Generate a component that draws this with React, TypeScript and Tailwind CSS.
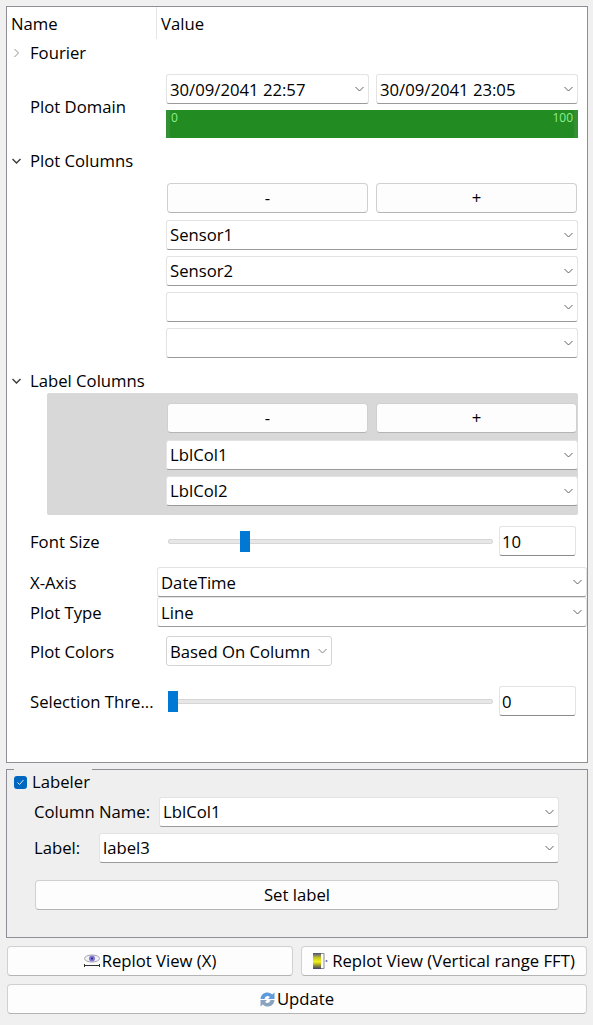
import type { ReactNode } from "react";

// Qt property-browser side panel, fixed at the window's 593x1025

function Chevron({ className = "", dir = "down" }: { className?: string; dir?: "down" | "right" }) {
    return (
        <svg width="9" height="6" viewBox="0 0 9 6" className={`shrink-0 ${dir === "right" ? "-rotate-90" : ""} ${className}`}>
            <path d="M0.5 1 L4.5 5 L8.5 1" fill="none" stroke="currentColor" strokeWidth="1" />
        </svg>
    );
}

function Combo({ text, className = "" }: { text?: string; className?: string }) {
    return (
        <div className={`flex h-[30px] items-center justify-between rounded-[3px] border border-[#e3e3e3] border-b-[#9a9a9a] bg-white pl-[3px] pr-[4px] ${className}`}>
            <span>{text}</span>
            <Chevron className="text-[#606060]" />
        </div>
    );
}

function Btn({ children, className = "" }: { children: ReactNode; className?: string }) {
    return (
        <div className={`flex h-[30px] items-center justify-center rounded-[4px] border border-[#d0d0d0] border-b-[#b4b4b4] bg-[#fdfdfd] ${className}`}>
            {children}
        </div>
    );
}

function Slider({ pos }: { pos: number }) {
    return (
        <div className="relative h-[5px] w-[325px] rounded-[2px] border border-[#d6d6d6] bg-[#e7e7e7]">
            <div className="absolute top-[-9px] h-[21px] w-[10px] bg-[#0078d4]" style={{ left: pos }} />
        </div>
    );
}

function SliderRow({ label, value, pos, className = "" }: { label: string; value: string; pos: number; className?: string }) {
    return (
        <div className={`flex h-[30px] items-center ${className}`}>
            <span className="w-[161px] translate-y-px pl-[23px]">{label}</span>
            <Slider pos={pos} />
            <div className="ml-[6px] flex h-[30px] w-[77px] items-center rounded-[3px] border border-[#e3e3e3] border-b-[#8a8a8a] bg-white pl-[2px]">
                <span className="translate-y-px">{value}</span>
            </div>
        </div>
    );
}

function Section({ label, className = "" }: { label: string; className?: string }) {
    return (
        <div className={`flex h-[20px] items-center pl-[5px] ${className}`}>
            <svg width="9" height="6" viewBox="0 0 9 6" className="shrink-0 text-[#404040]">
                <path d="M0.5 1 L4.5 5 L8.5 1" fill="none" stroke="currentColor" strokeWidth="1.5" />
            </svg>
            <span className="ml-[9px]">{label}</span>
        </div>
    );
}

function PlusMinus() {
    return (
        <div className="flex gap-[8px] px-[1px]">
            <Btn className="w-[201px]">-</Btn>
            <Btn className="w-[201px]">+</Btn>
        </div>
    );
}

function EyeIcon() {
    return (
        <svg width="16" height="16" viewBox="0 0 16 16" className="shrink-0">
            <ellipse cx="8" cy="5.5" rx="7.5" ry="3.5" fill="#f2f2f6" stroke="#a5a5ad" />
            <circle cx="8" cy="5.5" r="3" fill="#7f78d8" />
            <circle cx="8" cy="5.5" r="1" fill="#20204a" />
            <path d="M0 12.5 H16 M0.5 11 V14 M15.5 11 V14" stroke="#303030" fill="none" />
        </svg>
    );
}

function FftIcon() {
    return (
        <svg width="15" height="16" viewBox="0 0 15 16" className="shrink-0">
            <defs>
                <linearGradient id="fftBar" x1="0" y1="0" x2="0" y2="1">
                    <stop offset="0" stopColor="#4a4a8a" />
                    <stop offset="0.3" stopColor="#c8c820" />
                    <stop offset="0.55" stopColor="#f2f21a" />
                    <stop offset="0.8" stopColor="#8a8a30" />
                    <stop offset="1" stopColor="#3a3a7a" />
                </linearGradient>
            </defs>
            <rect x="0" y="0" width="8" height="16" fill="url(#fftBar)" />
            <path d="M8 0.5 H11 V15.5 H8" fill="none" stroke="#8a8a8a" />
            <circle cx="13.5" cy="8" r="1" fill="#6a6ab8" />
        </svg>
    );
}

function RefreshIcon() {
    return (
        <svg width="15" height="15" viewBox="0 0 15 15" className="shrink-0">
            <path d="M0.5 7 C1 2.5 4 0.5 7.5 0.5 C9.5 0.5 11 1.5 12.2 2.6 L14.5 0.5 V7 H8 L10 5 C8 3.4 5.5 3.6 4.5 7 Z" fill="#5f9bdc" />
            <path d="M14.5 8 C14 12.5 11 14.5 7.5 14.5 C5.5 14.5 4 13.5 2.8 12.4 L0.5 14.5 V8 H7 L5 10 C7 11.6 9.5 11.4 10.5 8 Z" fill="#8aa4c0" />
        </svg>
    );
}

export default function App() {
    return (
        <div className="h-[1025px] w-[593px] overflow-hidden bg-[#f0f0f0] pl-[6px] pr-[5px] pt-[6px] text-[16.7px] leading-[22px] text-black [font-family:'Open_Sans',sans-serif]">
            {/* property tree */}
            <div className="h-[757px] border border-[#8e8e94] bg-white">
                <div className="flex h-[32px] items-center">
                    <span className="w-[149px] translate-y-px pl-[4px]">Name</span>
                    <div className="flex h-full items-center border-l border-[#e5e5e5] pl-[4px]">
                        <span className="translate-y-px">Value</span>
                    </div>
                </div>

                <div className="mt-[4px] flex h-[20px] items-center pl-[5px]">
                    <Chevron dir="right" className="text-[#909090]" />
                    <span className="ml-[9px]">Fourier</span>
                </div>

                <div className="mt-[11px] flex">
                    <span className="w-[159px] translate-y-px self-center pl-[23px]">Plot Domain</span>
                    <div className="w-[412px]">
                        <div className="flex gap-[7px] [&_span]:translate-y-px">
                            <Combo text="30/09/2041 22:57" className="w-[203px]" />
                            <Combo text="30/09/2041 23:05" className="w-[202px]" />
                        </div>
                        <div className="mt-[6px] flex h-[28px] justify-between border-x-4 border-[#338f33] bg-[#228b22] px-[1px] text-[12px] leading-[16px] text-[#8cf08c]">
                            <span>0</span>
                            <span>100</span>
                        </div>
                    </div>
                </div>

                <Section label="Plot Columns" className="mt-[13px]" />

                <div className="ml-[159px] mt-[12px] flex w-[412px] flex-col">
                    <PlusMinus />
                    <div className="mt-[7px] flex flex-col gap-[6px]">
                        <Combo text="Sensor1" />
                        <Combo text="Sensor2" />
                        <Combo />
                        <Combo />
                    </div>
                </div>

                <Section label="Label Columns" className="mt-[13px]" />

                <div className="ml-[40px] mt-[2px] flex h-[122px] w-[531px] flex-col rounded-[2px] bg-[#d8d8d8] pl-[119px] pt-[10px]">
                    <PlusMinus />
                    <div className="mt-[7px] flex flex-col gap-[6px]">
                        <Combo text="LblCol1" />
                        <Combo text="LblCol2" />
                    </div>
                </div>

                <SliderRow label="Font Size" value="10" pos={71} className="mt-[11px]" />

                <div className="mt-[11px] flex [&_span]:translate-y-px">
                    <span className="w-[150px] self-center pl-[23px]">X-Axis</span>
                    <Combo text="DateTime" className="w-[430px]" />
                </div>
                <div className="flex [&_span]:translate-y-px">
                    <span className="w-[150px] self-center pl-[23px]">Plot Type</span>
                    <Combo text="Line" className="w-[430px]" />
                </div>

                <div className="mt-[9px] flex [&_span]:translate-y-px">
                    <span className="w-[159px] self-center pl-[23px]">Plot Colors</span>
                    <div className="flex h-[30px] w-[166px] items-center justify-between rounded-[3px] border border-[#d4d4d4] bg-white pl-[3px] pr-[4px]">
                        <span>Based On Column</span>
                        <Chevron className="text-[#808080]" />
                    </div>
                </div>

                <SliderRow label="Selection Thre..." value="0" pos={-1} className="mt-[20px]" />
            </div>

            {/* labeler group */}
            <div className="relative mt-[6px] h-[169px] border border-[#8e8e94] bg-[#efefef]">
                <div className="absolute left-[7px] top-[-1px] flex h-[24px] w-[78px] items-center bg-[#efefef] pt-[2px]">
                    <div className="flex h-[13px] w-[13px] items-center justify-center rounded-[3px] bg-[#0067c0]">
                        <svg width="9" height="9" viewBox="0 0 9 9">
                            <path d="M1.5 4.5 L3.5 6.5 L7.5 2" fill="none" stroke="#d8e8f8" strokeWidth="1" />
                        </svg>
                    </div>
                    <span className="ml-[5px]">Labeler</span>
                </div>
                <div className="ml-[27px] mr-[28px] flex items-center pt-[27px]">
                    <span className="w-[125px]">Column Name:</span>
                    <Combo text="LblCol1" className="flex-1" />
                </div>
                <div className="ml-[27px] mr-[28px] mt-[6px] flex items-center">
                    <span className="w-[65px]">Label:</span>
                    <Combo text="label3" className="flex-1" />
                </div>
                <Btn className="mx-[28px] mt-[17px]">Set label</Btn>
            </div>

            {/* bottom actions */}
            <div className="mt-[8px] flex gap-[8px] pl-[1px]">
                <Btn className="w-[286px] gap-[2px]">
                    <EyeIcon />
                    <span>Replot View (X)</span>
                </Btn>
                <Btn className="w-[286px] gap-[4px]">
                    <FftIcon />
                    <span>Replot View (Vertical range FFT)</span>
                </Btn>
            </div>
            <Btn className="ml-[1px] mt-[8px] w-[580px] gap-[2px]">
                <RefreshIcon />
                <span>Update</span>
            </Btn>
        </div>
    );
}
